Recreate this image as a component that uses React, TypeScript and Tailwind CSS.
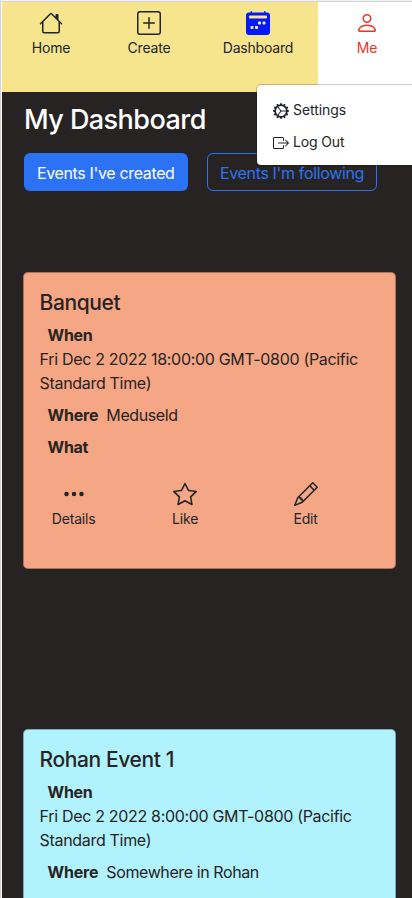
import type { ReactNode } from "react";
import {
  BsHouse, BsPlusSquare, BsCalendar2WeekFill, BsPerson, BsGearWideConnected,
  BsBoxArrowRight, BsThreeDots, BsStar, BsPencil,
} from "react-icons/bs";

function NavItem({ icon, label, className }: { icon: ReactNode; label: string; className: string }) {
  return (
    <a className={`flex shrink-0 flex-col items-center pt-[9px] text-[14px] leading-[21px] tracking-[-0.2px] ${className}`}>
      {icon}
      <span className="mt-[2px]">{label}</span>
    </a>
  );
}

function Action({ icon, label, className }: { icon: ReactNode; label: string; className: string }) {
  return (
    <div className={`flex flex-col items-center text-[14px] leading-[21px] tracking-[-0.2px] text-[#212529] ${className}`}>
      {icon}
      <span className="mt-[2px]">{label}</span>
    </div>
  );
}

function EventCard({ title, when, where, className }: { title: string; when: string; where: string; className: string }) {
  return (
    <article className={`ml-[21px] h-[297px] w-[372.5px] shrink-0 rounded-[5px] border border-black/30 px-[15.6px] pt-4 ${className}`}>
      <h2 className="h-[30px] text-[21px] leading-[28px] font-medium tracking-[-0.4px]">{title}</h2>
      <h3 className="mt-1 ml-2 font-bold tracking-[-0.3px]">When</h3>
      <p className="tracking-[-0.32px] whitespace-pre-line">{when}</p>
      <p className="mt-2 ml-2 flex gap-2"><b className="tracking-[-0.2px]">Where</b><span className="tracking-[-0.4px]">{where}</span></p>
      <h3 className="mt-2 ml-2 font-bold tracking-[-0.3px]">What</h3>
      <div className="mt-[23px] flex">
        <Action icon={<BsThreeDots size={24} />} label="Details" className="w-[68px]" />
        <Action icon={<BsStar size={24} />} label="Like" className="ml-[44px] w-[67px]" />
        <Action icon={<BsPencil size={24} />} label="Edit" className="ml-[54px] w-[66px]" />
      </div>
    </article>
  );
}

export default function App() {
  return (
    <div className="h-[898px] w-[412px] overflow-hidden border-t border-l border-t-[#f1f1f1] border-l-[#d4d4d4] bg-[#272322] font-['Inter',sans-serif] text-[16px] leading-6 tracking-[-0.35px] text-[#272322]">
      <div className="flex h-full flex-col border-t border-l border-t-[#d4d4d4] border-l-white">
        <nav className="relative flex h-[90px] shrink-0 bg-[#f7e58e] text-[#212529]">
          <NavItem icon={<BsHouse size={24} />} label="Home" className="w-[98px]" />
          <NavItem icon={<BsPlusSquare size={24} />} label="Create" className="w-[98px]" />
          <NavItem icon={<BsCalendar2WeekFill size={24} color="#0019ff" />} label="Dashboard" className="w-[120px]" />
          <NavItem icon={<BsPerson size={24} />} label="Me" className="w-[98px] bg-white text-[#ee3326]" />
          <div className="absolute top-[82px] left-[254px] z-10 flex h-[82px] w-[170px] flex-col gap-[11px] rounded-[5px] border border-black/20 bg-white bg-clip-padding pt-[14px] pl-4 text-[14px] leading-[21px] tracking-[-0.05px]">
            <div className="flex items-center gap-1"><BsGearWideConnected size={16} className="mt-[2px]" />Settings</div>
            <div className="flex items-center gap-1 tracking-[-0.15px]"><BsBoxArrowRight size={16} className="mt-[2px]" />Log Out</div>
          </div>
        </nav>
        <h1 className="mt-[10px] ml-[22px] h-[34px] shrink-0 text-[27px] leading-[36px] font-medium tracking-[-0.55px] text-white">My Dashboard</h1>
        <div className="mt-[17px] ml-[22px] flex h-[38px] shrink-0 gap-[19.5px]">
          <button className="w-[163.5px] rounded-[6px] bg-[#2c72f5] pt-px text-white">Events I've created</button>
          <button className="w-[170px] rounded-[6px] border border-[#2c72f5] pt-px text-[#2c72f5]">Events I'm following</button>
        </div>
        <EventCard title="Banquet" when={"Fri Dec 2 2022 18:00:00 GMT-0800 (Pacific\nStandard Time)"} where="Meduseld" className="mt-[81px] bg-[#f5a685]" />
        <EventCard title="Rohan Event 1" when={"Fri Dec 2 2022 8:00:00 GMT-0800 (Pacific\nStandard Time)"} where="Somewhere in Rohan" className="mt-[160px] bg-[#b0f3fe]" />
      </div>
    </div>
  );
}
